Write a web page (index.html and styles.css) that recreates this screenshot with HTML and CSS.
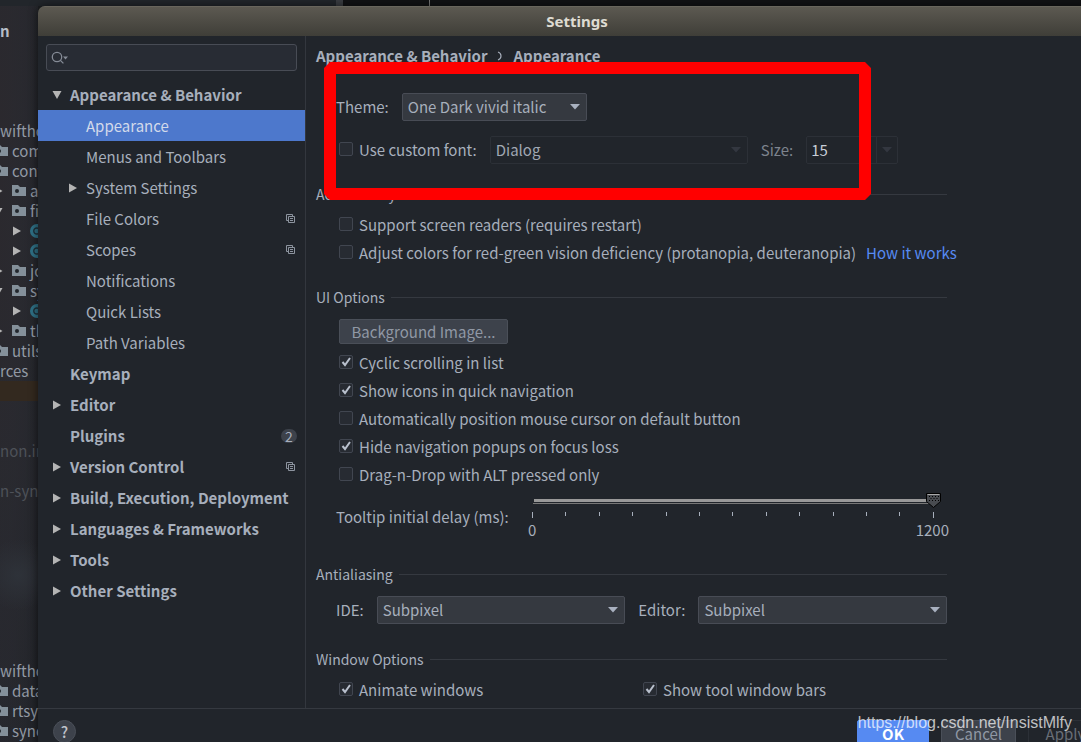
FILE: index.html
```html
<!DOCTYPE html>
<html lang="en">
<head>
<meta charset="utf-8">
<title>Settings</title>
<link rel="stylesheet" href="styles.css">
</head>
<body>
<svg class="defs" aria-hidden="true">
  <symbol id="right" viewBox="0 0 9 10"><path d="M1 0.5 9 5 1 9.5Z" fill="#b4b4b4"/></symbol>
  <symbol id="down" viewBox="0 0 10 9"><path d="M0.5 1h9L5 9Z" fill="#b4b4b4"/></symbol>
  <symbol id="folder" viewBox="0 0 14 12"><path d="M0 0h6l2 2h6v9H0Z" fill="#84909a"/><circle cx="5" cy="6" r="2" fill="#23272d"/></symbol>
  <symbol id="klass" viewBox="0 0 14 14"><circle cx="7" cy="7" r="7" fill="#2f7186"/><path d="M9 5a3 3 0 1 0 0 4" fill="none" stroke="#1f2f38" stroke-width="1.4"/></symbol>
  <symbol id="copy" viewBox="0 0 9 9"><path d="M2 6.5H.5v-6h6V2M2.5 2.5h6v6h-6ZM4 4.5h3M4 6.5h3" fill="none" stroke="#8d949f"/></symbol>
</svg>

<ul class="project" aria-hidden="true">
  <li class="strong first">n</li>
  <li class="module">swifthome</li>
  <li class="lvl0"><svg width="14" height="12"><use href="#folder"/></svg>common</li>
  <li class="lvl0"><svg width="14" height="12"><use href="#folder"/></svg>config</li>
  <li class="lvl1"><svg width="9" height="10"><use href="#right"/></svg><svg width="14" height="12"><use href="#folder"/></svg>api</li>
  <li class="lvl1"><svg width="10" height="9"><use href="#down"/></svg><svg width="14" height="12"><use href="#folder"/></svg>file</li>
  <li class="lvl2"><svg width="9" height="10"><use href="#right"/></svg><svg width="14" height="14"><use href="#klass"/></svg></li>
  <li class="lvl2"><svg width="9" height="10"><use href="#right"/></svg><svg width="14" height="14"><use href="#klass"/></svg></li>
  <li class="lvl1"><svg width="9" height="10"><use href="#right"/></svg><svg width="14" height="12"><use href="#folder"/></svg>job</li>
  <li class="lvl1"><svg width="10" height="9"><use href="#down"/></svg><svg width="14" height="12"><use href="#folder"/></svg>sync</li>
  <li class="lvl2"><svg width="9" height="10"><use href="#right"/></svg><svg width="14" height="14"><use href="#klass"/></svg></li>
  <li class="lvl1"><svg width="9" height="10"><use href="#right"/></svg><svg width="14" height="12"><use href="#folder"/></svg>thread</li>
  <li class="lvl0"><svg width="14" height="12"><use href="#folder"/></svg>utils</li>
  <li>rces</li>
  <li class="marked"></li>
  <li class="dim gap-s">non.iml</li>
  <li class="dim gap-xs">n-sync</li>
  <li class="module gap-l">swifthome</li>
  <li class="lvl0"><svg width="14" height="12"><use href="#folder"/></svg>data</li>
  <li class="lvl0"><svg width="14" height="12"><use href="#folder"/></svg>rtsync</li>
  <li class="lvl0"><svg width="14" height="12"><use href="#folder"/></svg>sync</li>
</ul>
<div class="editor-edge" aria-hidden="true"></div>

<div class="dialog" role="dialog" aria-labelledby="title">
  <header class="titlebar" id="title">Settings</header>
  <div class="content">
    <nav class="sidebar">
      <div class="search">
        <svg width="18" height="14" viewBox="0 0 18 14" fill="none" stroke="#858b96" stroke-width="1.3"><circle cx="6" cy="6" r="4.7"/><path d="m9.4 9.4 3 3"/><path d="M12 5.5h5L14.500 8.500Z" fill="#858b96" stroke="none"/></svg>
        <input type="search" aria-label="Search settings">
      </div>
      <ul class="tree">
        <li class="top"><svg width="10" height="9"><use href="#down"/></svg><span>Appearance &amp; Behavior</span></li>
        <li class="sub selected"><span>Appearance</span></li>
        <li class="sub"><span>Menus and Toolbars</span></li>
        <li class="sub"><svg width="9" height="10"><use href="#right"/></svg><span>System Settings</span></li>
        <li class="sub"><span>File Colors</span><svg class="mark" width="9" height="9"><use href="#copy"/></svg></li>
        <li class="sub"><span>Scopes</span><svg class="mark" width="9" height="9"><use href="#copy"/></svg></li>
        <li class="sub"><span>Notifications</span></li>
        <li class="sub"><span>Quick Lists</span></li>
        <li class="sub"><span>Path Variables</span></li>
        <li class="top"><span>Keymap</span></li>
        <li class="top"><svg width="9" height="10"><use href="#right"/></svg><span>Editor</span></li>
        <li class="top"><span>Plugins</span><b class="count">2</b></li>
        <li class="top"><svg width="9" height="10"><use href="#right"/></svg><span>Version Control</span><svg class="mark" width="9" height="9"><use href="#copy"/></svg></li>
        <li class="top"><svg width="9" height="10"><use href="#right"/></svg><span>Build, Execution, Deployment</span></li>
        <li class="top"><svg width="9" height="10"><use href="#right"/></svg><span>Languages &amp; Frameworks</span></li>
        <li class="top"><svg width="9" height="10"><use href="#right"/></svg><span>Tools</span></li>
        <li class="top"><svg width="9" height="10"><use href="#right"/></svg><span>Other Settings</span></li>
      </ul>
    </nav>
    <main class="page">
      <h1 class="crumbs">Appearance &amp; Behavior<svg width="6" height="10" viewBox="0 0 6 10" fill="none" stroke="#a4abb8" stroke-width="1.2"><path d="M1 1q3 1 3 4t-3 4"/></svg>Appearance</h1>
      <div class="row theme">
        <label for="theme">Theme:</label>
        <select id="theme" class="theme-select"><option>One Dark vivid italic</option></select>
      </div>
      <div class="row font">
        <label class="check"><input type="checkbox">Use custom font:</label>
        <select class="font-select" aria-label="Font" disabled><option>Dialog</option></select>
        <label class="muted" for="size">Size:</label>
        <div class="combo"><input id="size" type="text" value="15"><button type="button" disabled aria-label="Sizes"></button></div>
      </div>

      <h2>Accessibility</h2>
      <div class="options">
        <label class="check"><input type="checkbox">Support screen readers (requires restart)</label>
        <div class="pair"><label class="check"><input type="checkbox">Adjust colors for red-green vision deficiency (protanopia, deuteranopia)</label><a href="#">How it works</a></div>
      </div>

      <h2>UI Options</h2>
      <button type="button" class="bg-image">Background Image...</button>
      <div class="options">
        <label class="check"><input type="checkbox" checked>Cyclic scrolling in list</label>
        <label class="check"><input type="checkbox" checked>Show icons in quick navigation</label>
        <label class="check"><input type="checkbox">Automatically position mouse cursor on default button</label>
        <label class="check"><input type="checkbox" checked>Hide navigation popups on focus loss</label>
        <label class="check"><input type="checkbox">Drag-n-Drop with ALT pressed only</label>
      </div>
      <div class="delay">
        <label for="delay">Tooltip initial delay (ms):</label>
        <div class="slider">
          <input id="delay" type="range" min="0" max="1200" value="1200">
          <div class="ticks"><i></i><i></i><i></i><i></i><i></i><i></i><i></i><i></i><i></i><i></i><i></i><i></i><i></i></div>
          <div class="scale"><span>0</span><span>1200</span></div>
        </div>
      </div>

      <h2>Antialiasing</h2>
      <div class="row aa">
        <label for="ide">IDE:</label>
        <select id="ide"><option>Subpixel</option></select>
        <label for="ed">Editor:</label>
        <select id="ed"><option>Subpixel</option></select>
      </div>

      <h2 class="last">Window Options</h2>
      <div class="options two">
        <label class="check"><input type="checkbox" checked>Animate windows</label>
        <label class="check"><input type="checkbox" checked>Show tool window bars</label>
      </div>
    </main>
  </div>
  <footer class="actions">
    <button type="button" class="help" aria-label="Help">?</button>
    <button type="button" class="ok">OK</button>
    <button type="button" class="cancel">Cancel</button>
    <button type="button" class="apply" disabled>Apply</button>
  </footer>
</div>

<svg class="highlight" width="547" height="138" aria-hidden="true"><path d="M6 6h535v126H6Z" fill="none" stroke="#f00" stroke-width="12" stroke-linejoin="bevel"/></svg>
<div class="watermark">https://blog.csdn.net/InsistMlfy</div>
</body>
</html>
```
FILE: styles.css
```css
* { box-sizing: border-box; }

html, body { height: 100%; }

body {
  margin: 0;
  position: relative;
  overflow: hidden;
  background: #1d1f22;
  color: #a7afbc;
  font: 15px/28px "Noto Sans CJK SC", "Noto Sans", sans-serif;
}

ul { list-style: none; margin: 0; padding: 0; }

button, input, select { font: inherit; color: inherit; margin: 0; }

.defs { position: absolute; width: 0; height: 0; }

/* Project tree behind the dialog */
.project {
  width: 38px;
  height: 100%;
  padding-top: 21px;
  overflow: hidden;
  line-height: 20px;
  color: #9299a4;
  background:
    radial-gradient(circle at 18px 575px, #2e3239 0, transparent 36px),
    radial-gradient(ellipse at 0 150px, #2b292e 0, transparent 60px),
    radial-gradient(ellipse at 10px 230px, #282c34 0, transparent 60px),
    linear-gradient(90deg, #202329, #1b1d20);
}

.project li {
  height: 20px;
  display: flex;
  align-items: center;
  white-space: nowrap;
}

.project svg { flex: none; }
.project .strong { font-weight: 700; color: #b6bcc6; }
.project .first { margin-bottom: 80px; }
.project .module { margin-left: -7px; }
.project .lvl0 { margin-left: -6px; gap: 4px; }
.project .lvl1 { margin-left: -7px; gap: 4px; }
.project .lvl1 svg:first-child { width: 10px; margin-right: 5px; }
.project .lvl2 { margin-left: 12px; gap: 9px; }
.project .marked { background: #33291f; }
.project .dim { color: #4d5158; }
.project .gap-s { margin-top: 40px; }
.project .gap-xs { margin-top: 20px; }
.project .gap-l { margin-top: 160px; }

.editor-edge {
  position: absolute;
  top: 0;
  left: 0;
  right: 0;
  height: 6px;
  background: linear-gradient(90deg, #22262b 0 336px, #3a3d42 336px 343px, #111214 343px 429px, #777 429px 430px, #111214 430px 100%);
}

/* Dialog window */
.dialog {
  position: absolute;
  top: 6px;
  left: 38px;
  right: -35px;
  bottom: -17px;
  display: flex;
  flex-direction: column;
  background: #21252b;
  border-radius: 7px 7px 0 0;
  box-shadow: 0 0 10px rgba(0, 0, 0, .6);
  overflow: hidden;
}

.titlebar {
  height: 30px;
  flex: none;
  text-align: center;
  color: #dedbd2;
  font: 700 15px/28px "Noto Sans", sans-serif;
  background: linear-gradient(#5c5951, #3f3e38);
  border-top: 1px solid #68655c;
}

.content { flex: 1; display: flex; min-height: 0; }

.sidebar {
  width: 268px;
  flex: none;
  border-right: 1px solid #33373e;
}

.search {
  height: 27px;
  margin: 8px 8px;
  padding: 0 4px;
  display: flex;
  align-items: center;
  background: #282c34;
  border: 1px solid #484c55;
  border-radius: 3px;
}

.search input {
  flex: 1;
  min-width: 0;
  background: none;
  border: 0;
  outline: 0;
}

.tree li {
  height: 31px;
  display: flex;
  align-items: center;
  padding-right: 10px;
  white-space: nowrap;
}

.tree .top { padding-left: 32px; font-weight: 700; }
.tree .sub { padding-left: 48px; }
.tree svg { flex: none; }
.tree li > svg:first-child { margin-left: -18px; margin-right: 9px; }
.tree .top > svg[width="10"]:first-child { margin-right: 8px; }
.tree .selected { background: #4d78cc; color: #d3daea; }
.tree .mark { margin-left: auto; }

.count {
  margin-left: auto;
  margin-right: -2px;
  width: 16px;
  height: 14px;
  border-radius: 7px;
  background: #3d424b;
  text-align: center;
  font-weight: 400;
  font-size: 14px;
  line-height: 14px;
}

.page {
  flex: 1;
  min-width: 0;
  padding: 6px 169px 4px 10px;
  overflow: hidden;
  white-space: nowrap;
}

.crumbs {
  margin: 0;
  display: flex;
  align-items: center;
  gap: 10px;
  font-size: 15px;
  line-height: 28px;
}

.row { display: flex; align-items: center; height: 28px; margin-left: 20px; }
.theme { margin-top: 23px; }
.theme-select { width: 185px; margin-left: 13px; }
.font { margin: 15px 0 16px 23px; }
.font-select { width: 258px; margin: 0 13px; }
.muted { color: #7d838d; }

select {
  appearance: none;
  height: 28px;
  padding: 0 24px 0 5px;
  border: 1px solid #484c55;
  border-radius: 2px;
  background: #353940 url("data:image/svg+xml,%3Csvg xmlns='http://www.w3.org/2000/svg' width='10' height='6'%3E%3Cpath d='M0 0h10L5 5.500z' fill='%23a9b1c0'/%3E%3C/svg%3E") no-repeat right 6px center;
  line-height: 24px;
}

select:disabled {
  opacity: 1;
  color: #a0a7b3;
  border-color: #2c3037;
  background: #21252b url("data:image/svg+xml,%3Csvg xmlns='http://www.w3.org/2000/svg' width='10' height='6'%3E%3Cpath d='M0 0h10L5 5.500z' fill='%23333740'/%3E%3C/svg%3E") no-repeat right 6px center;
}

.combo {
  display: flex;
  width: 92px;
  height: 28px;
  margin-left: 13px;
  border: 1px solid #2c3037;
  border-radius: 2px;
}

.combo input {
  width: 69px;
  padding: 0 4px;
  border: 0;
  background: none;
  color: #c8ced8;
}

.combo button {
  flex: 1;
  border: 0;
  border-left: 1px solid #2c3037;
  background: url("data:image/svg+xml,%3Csvg xmlns='http://www.w3.org/2000/svg' width='10' height='6'%3E%3Cpath d='M0 0h10L5 5.500z' fill='%23333740'/%3E%3C/svg%3E") no-repeat center;
}

h2 {
  margin: 16px 0 0;
  display: flex;
  align-items: center;
  gap: 6px;
  font-size: 14px;
  font-weight: 400;
  line-height: 28px;
}

h2::after { content: ""; flex: 1; height: 1px; background: #353940; }
h2.last { margin-top: 21px; }

.options { margin: 3px 0 0 23px; }

.check {
  display: flex;
  align-items: center;
  gap: 6px;
  height: 28px;
}

.check input {
  appearance: none;
  width: 14px;
  height: 14px;
  margin-bottom: 2px;
  flex: none;
  border: 1px solid #414650;
  border-radius: 2px;
  background: #272b32;
}

.check input:checked {
  background: #272b32 url("data:image/svg+xml,%3Csvg xmlns='http://www.w3.org/2000/svg' width='12' height='12'%3E%3Cpath d='M2.500 6l2.500 3 5-7' fill='none' stroke='%23b9c0cd' stroke-width='2'/%3E%3C/svg%3E") center no-repeat;
}

.pair { display: flex; gap: 10px; }
.pair a { color: #568af2; text-decoration: none; }

.bg-image {
  display: block;
  width: 169px;
  height: 25px;
  margin: 8px 0 5px 23px;
  padding: 0;
  border: 1px solid #4a4f58;
  border-radius: 2px;
  background: #3d424b;
  color: #9098a5;
  line-height: 23px;
}

.bg-image + .options { margin-top: 0; }

.delay {
  display: flex;
  align-items: center;
  justify-content: space-between;
  height: 55px;
  margin: 0 -2px 0 20px;
}

.slider { flex: none; width: 432px; }

.slider input {
  appearance: none;
  display: block;
  width: calc(100% - 17px);
  height: 15px;
  margin: 0 8px 0 9px;
  background: linear-gradient(#999, #999) 8px 6px / calc(100% - 16px) 3px no-repeat,
    linear-gradient(#777, #777) 7px 10px / calc(100% - 15px) 1px no-repeat;
}

.slider input::-webkit-slider-thumb {
  appearance: none;
  width: 15px;
  height: 15px;
  background: url("data:image/svg+xml,%3Csvg xmlns='http://www.w3.org/2000/svg' width='15' height='15'%3E%3Cpath d='M.5.5h14v8l-7 6-7-6z' fill='%23484b50' stroke='%23000'/%3E%3Cpath d='M1.500 1.500h12' stroke='%23aaa'/%3E%3Cpath d='M3 3.500h10M4.500 5.500h8M3 7.500h10' stroke='%23000' stroke-dasharray='1 2'/%3E%3C/svg%3E");
}

.ticks {
  display: flex;
  justify-content: space-between;
  height: 8px;
  margin: 4px 15px 0;
}

.ticks i { width: 1px; height: 4px; background: #a7afbc; }
.ticks i:first-child, .ticks i:last-child { height: 6px; }

.scale {
  display: flex;
  justify-content: space-between;
  padding-left: 11px;
  line-height: 20px;
}

.aa { margin-top: 8px; gap: 13px; }
.aa select { flex: 1; min-width: 0; }

.two { display: grid; grid-template-columns: 1fr 1fr; }

.actions {
  flex: none;
  display: flex;
  gap: 12px;
  height: 51px;
  padding: 11px 13px 0 15px;
  border-top: 1px solid #353940;
}

.actions button {
  width: 75px;
  height: 27px;
  padding: 0;
  border: 1px solid #4a4f58;
  border-radius: 2px;
  background: #3d424b;
  color: #9098a5;
  line-height: 25px;
}

.actions .help {
  width: 23px;
  height: 23px;
  margin-right: auto;
  border-radius: 50%;
  color: #c0c4cc;
  font-weight: 500;
  line-height: 21px;
}

.actions .ok { width: 72px; background: #568af2; border-color: #568af2; color: #fff; font-weight: 700; }
.actions .apply { background: none; border-color: #2c3037; color: #696e77; }

/* Overlays */
.highlight { position: absolute; left: 324px; top: 62px; pointer-events: none; }

.watermark {
  position: absolute;
  right: 9px;
  bottom: 9px;
  font: 16px/20px "Liberation Sans", Arial, sans-serif;
  color: rgba(255, 255, 255, .72);
  pointer-events: none;
}
```
